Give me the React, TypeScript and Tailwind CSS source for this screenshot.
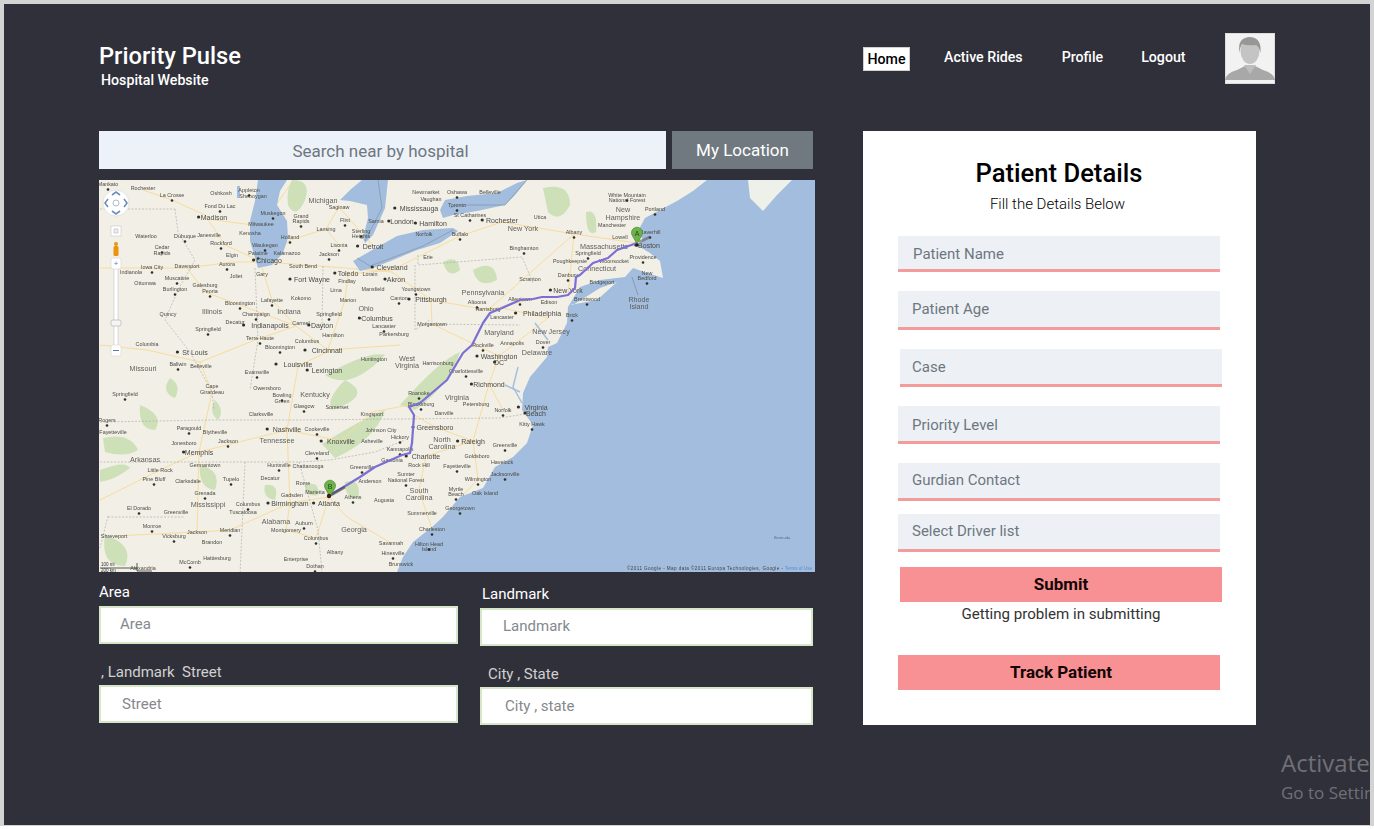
// App.tsx
import React from "react";

type Label = [string, number, number];

const cities: Label[] = [
  ["Mankato", 108, 184], ["Rochester", 143, 188], ["La Crosse", 172, 195], ["Oshkosh", 221, 193], ["Appleton", 249, 190],
  ["Sheboygan", 253, 196], ["Fond Du Lac", 220, 206], ["Milwaukee", 261, 224], ["Muskegon", 273, 213], ["Grand", 301, 216],
  ["Rapids", 301, 221], ["Saginaw", 339, 207], ["Flint", 345, 220], ["Lansing", 326, 229], ["Holland", 290, 237],
  ["Waterloo", 146, 236], ["Cedar", 162, 247], ["Rapids", 162, 253], ["Dubuque", 185, 236], ["Janesville", 209, 235],
  ["Rockford", 221, 243], ["Kenosha", 250, 233], ["Waukegan", 265, 245], ["Elgin", 232, 255], ["Palatine", 258, 253],
  ["Kalamazoo", 287, 253], ["Jackson", 329, 254], ["South Bend", 303, 266], ["Aurora", 227, 264], ["Davenport", 187, 266],
  ["Iowa City", 152, 267], ["Indianola", 131, 272], ["Muscatine", 177, 278], ["Joliet", 236, 276], ["Gary", 262, 274],
  ["Findlay", 347, 281], ["Burlington", 175, 289], ["Galesburg", 205, 285], ["Peoria", 210, 291], ["Ottumwa", 145, 283],
  ["Lima", 336, 290], ["Marion", 348, 300], ["Lafayette", 272, 300], ["Kokomo", 301, 298], ["Bloomington", 240, 303],
  ["Quincy", 168, 314], ["Champaign", 256, 314], ["Decatur", 235, 322], ["Springfield", 208, 329], ["Carmel", 301, 323],
  ["Springfield", 329, 314], ["Hamilton", 333, 335], ["Terre Haute", 260, 338], ["Columbus", 307, 341], ["Bloomington", 280, 347],
  ["Columbia", 147, 344], ["Ballwin", 178, 364], ["Belleville", 201, 366], ["Evansville", 257, 372], ["Owensboro", 267, 388],
  ["Cape", 212, 386], ["Girardeau", 212, 392], ["Bowling", 282, 395], ["Green", 282, 401], ["Springfield", 125, 394],
  ["Clarksville", 261, 414], ["Glasgow", 304, 406], ["Somerset", 337, 407], ["Rogers", 107, 420], ["Fayetteville", 113, 432],
  ["Paragould", 189, 428], ["Blytheville", 215, 432], ["Cookeville", 317, 429], ["Jonesboro", 184, 443], ["Jackson", 228, 441],
  ["Germantown", 205, 465], ["Cleveland", 317, 453], ["Chattanooga", 308, 466], ["Huntsville", 279, 465], ["Little Rock", 160, 470],
  ["Pine Bluff", 154, 479], ["Decatur", 270, 478], ["Tupelo", 231, 479], ["Clarksdale", 188, 481], ["Rome", 303, 483],
  ["Gadsden", 292, 495], ["Grenada", 205, 493], ["Marietta", 315, 492], ["Columbus", 248, 504], ["Tuscaloosa", 243, 512],
  ["El Dorado", 139, 508], ["Greenville", 176, 512], ["Auburn", 304, 523], ["Montgomery", 286, 530], ["Monroe", 152, 526],
  ["Jackson", 197, 532], ["Meridian", 230, 530], ["Shreveport", 114, 536], ["Vicksburg", 174, 536], ["Brandon", 212, 542],
  ["Columbus", 316, 538], ["Hattiesburg", 217, 558], ["McComb", 190, 562], ["Enterprise", 296, 559], ["Dothan", 315, 566],
  ["Albany", 335, 552], ["Alexandria", 143, 568], ["Newmarket", 426, 192], ["Oshawa", 457, 192], ["Vaughan", 431, 199],
  ["Toronto", 457, 205], ["Belleville", 490, 192], ["St Catharines", 470, 215], ["Utica", 540, 217], ["Albany", 574, 232],
  ["Sarnia", 376, 221], ["Buffalo", 460, 234], ["Norfolk", 424, 234], ["Sterling", 361, 231], ["Heights", 361, 236],
  ["Livonia", 339, 245], ["Erie", 428, 257], ["Binghamton", 524, 248], ["Lorain", 370, 274], ["Youngstown", 416, 289],
  ["Mansfield", 373, 289], ["Canton", 399, 298], ["Scranton", 530, 279], ["Altoona", 477, 302], ["Harrisburg", 488, 309],
  ["Allentown", 520, 299], ["Edison", 549, 302], ["Danbury", 568, 275], ["Bridgeport", 602, 282], ["Brentwood", 587, 299],
  ["Poughkeepsie", 570, 261], ["Springfield", 588, 253], ["Woonsocket", 614, 261], ["Providence", 643, 257], ["Lowell", 620, 237],
  ["Haverhill", 650, 232], ["Manchester", 612, 225], ["White Mountain", 627, 195], ["National Forest", 627, 200], ["Portland", 655, 209],
  ["New", 647, 273], ["Bedford", 647, 278], ["Lancaster", 502, 317], ["Brick", 572, 315], ["Morgantown", 432, 324],
  ["Lancaster", 384, 326], ["Parkersburg", 394, 334], ["Dover", 543, 342], ["Annapolis", 512, 343], ["Rockville", 483, 345],
  ["Harrisonburg", 438, 363], ["Charlottesville", 466, 371], ["Huntington", 374, 359], ["Roanoke", 419, 393], ["Petersburg", 476, 404],
  ["Blacksburg", 421, 404], ["Danville", 444, 413], ["Norfolk", 503, 410], ["Kingsport", 372, 414], ["Kitty Hawk", 532, 424],
  ["Johnson City", 381, 430], ["Hickory", 400, 437], ["Asheville", 372, 441], ["Greenville", 505, 445], ["Goldsboro", 477, 456],
  ["Kannapolis", 400, 449], ["Rock Hill", 419, 465], ["Fayetteville", 457, 466], ["Havelock", 502, 462], ["Jacksonville", 505, 474],
  ["Gastonia", 392, 460], ["Greenville", 362, 467], ["Sumter", 406, 474], ["National Forest", 406, 480], ["Anderson", 370, 481],
  ["Wilmington", 478, 479], ["Myrtle", 456, 489], ["Beach", 456, 494], ["Oak Island", 485, 493], ["Athens", 353, 497],
  ["Augusta", 384, 500], ["Georgetown", 460, 508], ["Summerville", 422, 513], ["Charleston", 432, 529], ["Savannah", 391, 543],
  ["Hilton Head", 429, 544], ["Island", 429, 549], ["Hinesville", 393, 553], ["Brunswick", 401, 564],
];

const bigCities: Label[] = [
  ["Madison", 214, 217], ["Chicago", 269, 260], ["Fort Wayne", 312, 279], ["Indianapolis", 270, 325], ["Dayton", 322, 325],
  ["Cincinnati", 327, 350], ["St Louis", 195, 352], ["Louisville", 298, 364], ["Lexington", 327, 370], ["Nashville", 287, 429],
  ["Knoxville", 341, 441], ["Memphis", 199, 452], ["Birmingham", 290, 503], ["Atlanta", 329, 503], ["Mississauga", 419, 208],
  ["Hamilton", 433, 223], ["Rochester", 502, 220], ["London", 402, 221], ["Detroit", 373, 246], ["Toledo", 348, 273],
  ["Cleveland", 392, 267], ["Akron", 396, 279], ["Pittsburgh", 431, 299], ["New York", 568, 290], ["Boston", 649, 245],
  ["Philadelphia", 542, 313], ["Columbus", 377, 318], ["Washington", 499, 356], ["DC", 499, 362], ["Richmond", 489, 384],
  ["Virginia", 536, 407], ["Beach", 536, 413], ["Greensboro", 435, 427], ["Raleigh", 473, 441], ["Charlotte", 426, 456],
];

const regions: Label[] = [
  ["Michigan", 323, 200], ["Illinois", 212, 311], ["Indiana", 289, 311], ["Missouri", 143, 368], ["Kentucky", 315, 394],
  ["Tennessee", 277, 440], ["Arkansas", 145, 459], ["Mississippi", 208, 504], ["Alabama", 276, 521], ["Georgia", 354, 529],
  ["New York", 523, 228], ["Pennsylvania", 483, 292], ["Ohio", 366, 308], ["Maryland", 499, 332], ["New Jersey", 551, 331],
  ["Delaware", 537, 352], ["West", 407, 358], ["Virginia", 407, 365], ["Virginia", 457, 397], ["North", 442, 439],
  ["Carolina", 442, 446], ["South", 419, 490], ["Carolina", 419, 497], ["Massachusetts", 604, 246], ["Connecticut", 597, 268],
  ["New", 623, 209], ["Hampshire", 623, 217], ["Rhode", 639, 299], ["Island", 639, 306],
];

const roads = [
  "M143 190 L172 200 L205 215 L225 245 L262 262",
  "M100 268 L187 268 L232 262 L266 262 L345 268 L392 272 L431 300",
  "M262 268 L272 300 L296 326 L328 350 L400 345",
  "M296 326 L240 305 L205 292 L187 268",
  "M296 326 L255 340 L200 362 L147 350 L100 345",
  "M200 362 L212 392 L199 452 L160 470 L100 500",
  "M199 452 L287 430 L341 441 L372 412 L420 403",
  "M287 430 L298 366 L327 352 L345 300 L348 274",
  "M287 430 L290 503 L329 497",
  "M290 503 L230 530 L197 532 L114 536",
  "M329 497 L316 538 L286 530 L290 503",
  "M329 497 L347 517 L391 543",
  "M426 456 L473 441 L435 427 L414 415",
  "M473 441 L478 479 L432 529",
  "M426 456 L419 490 L432 529",
  "M348 274 L392 270 L460 236 L502 222 L574 234 L637 243",
  "M574 234 L568 295",
  "M431 300 L488 310 L533 299",
  "M488 310 L574 234",
  "M502 308 L548 318 L499 356 L489 384 L503 410",
  "M489 384 L473 441",
  "M339 245 L326 229 L339 207 L373 246",
  "M326 229 L290 240 L268 262",
  "M214 220 L261 226 L290 185",
  "M199 452 L197 532",
  "M431 300 L432 324 L499 356",
];

const borders = [
  "M100 209 L175 209",
  "M255 268 L258 340 L250 390",
  "M323 266 L322 330",
  "M175 209 L178 232 L195 260 L178 290 L165 320 L190 352 L212 392 L214 410",
  "M100 422 L215 420 L300 420 L500 418 L525 414",
  "M100 462 L300 462 L330 460 L375 452 L405 440",
  "M108 516 L100 548",
  "M108 517 L185 517",
  "M245 462 L240 575",
  "M299 462 L318 530 L322 572",
  "M415 265 L415 330 L430 320",
  "M418 255 L418 265 L522 257 L533 283",
  "M425 324 L520 325",
];

const greens = [
  "M292 180 Q312 180 305 200 Q296 220 288 205 Q286 190 292 180Z",
  "M543 188 Q570 182 570 205 Q560 224 548 212Z",
  "M586 212 Q598 208 596 232 Q586 238 586 212Z",
  "M443 262 Q458 254 460 270 Q448 280 443 262Z",
  "M473 270 Q495 258 497 280 Q478 290 473 270Z",
  "M140 405 Q165 415 155 430 Q138 430 140 405Z",
  "M103 438 Q130 432 138 450 Q125 458 105 452Z",
  "M100 470 Q125 460 130 468 Q115 480 100 482Z",
  "M170 378 Q182 385 175 398 Q160 392 170 378Z",
  "M215 400 Q225 410 218 420 Q208 412 215 400Z",
  "M332 410 Q375 395 345 380 Q325 400 332 410Z",
  "M325 375 Q370 350 385 355 Q350 392 325 375Z",
  "M400 405 Q440 360 460 352 Q450 385 415 410Z",
  "M322 444 Q360 420 385 410 Q375 440 335 458Z",
  "M200 465 Q222 470 215 490 Q198 488 200 465Z",
  "M345 482 Q362 478 358 498 Q345 500 345 482Z",
  "M105 535 Q135 545 125 566 Q100 566 105 535Z",
  "M305 485 Q320 480 318 495 Q305 498 305 485Z",
  "M265 485 Q280 483 275 500 Q262 498 265 485Z",
];

const route =
  "M637 243 L617 250 L608 258 L593 263 L580 275 L576 277 L575 288 L568 295 L557 297 L542 297 L533 299 L520 300 L502 308 L490 313 L483 323 L478 333 L472 345 L463 353 L457 363 L447 380 L433 392 L420 403 L409 407 L414 415 L412 443 L410 453 L402 455 L375 467 L360 477 L347 485 L330 495";

const MapView = () => (
  <svg viewBox="99 180 716 392" className="block w-[716px] h-[392px] mt-[11px] blur-[0.4px]" fontFamily="Liberation Sans, sans-serif">
    <rect x="99" y="180" width="716" height="392" fill="#f2efe6" />
    {greens.map((d, i) => (
      <path key={i} d={d} fill="#cde0b8" />
    ))}
    <g fill="none" stroke="#f8dc9c" strokeWidth="1">
      {roads.map((d, i) => (
        <path key={i} d={d} />
      ))}
    </g>
    <g fill="none" stroke="#a5a5a5" strokeWidth="0.6" strokeDasharray="2 1.5">
      {borders.map((d, i) => (
        <path key={i} d={d} />
      ))}
    </g>
    {/* ocean and lakes */}
    <g fill="#a2bddd">
      <path d="M815 180 L707 180 L693 191 L677 201 L660 210 L645 218 L638 231 L643 240 L638 246 L650 253 L660 261 L663 278 L647 273 L633 268 L625 277 L600 280 L580 287 L568 307 L567 323 L557 343 L548 347 L547 357 L530 377 L523 393 L522 410 L533 425 L527 443 L513 457 L495 467 L483 488 L460 497 L443 517 L432 527 L413 542 L403 557 L397 572 L815 572Z" />
      <path d="M258 180 L287 180 L280 191 L277 205 L287 221 L288 238 L283 253 L272 265 L258 268 L255 258 L250 241 L250 221 L255 201Z" />
      <path d="M340 200 L350 190 L362 180 L388 180 L385 208 L373 235 L365 243 L363 238 L368 218 L367 205 L350 201Z" />
      <path d="M353 261 L367 253 L397 236 L423 230 L453 228 L458 231 L440 243 L417 250 L393 260 L373 268 L360 271Z" />
      <path d="M440 210 L445 200 L467 196 L497 193 L517 183 L527 180 L515 195 L505 205 L477 211 L453 215 L443 218Z" />
      <path d="M237 186 L240 186 L240 198 L237 198Z" />
    </g>
    <path d="M573 305 L600 288 L617 282 L597 300 L570 305Z" fill="#f2efe6" />
    <path d="M748 180 L792 180 L777 195 L763 211 L750 198Z" fill="#eef0ea" />
    <g fill="none" stroke="#a2bddd" strokeWidth="1.4">
      <path d="M518 367 L513 387 L522 403" />
      <path d="M535 323 L548 340" />
      <path d="M505 385 L520 392" />
    </g>
    <path d="M378 180 L382 208 L365 241 M357 258 L370 266 L397 256 L423 246 L453 230 M450 208 L457 205 L505 205 L527 180" fill="none" stroke="#7f8c9b" strokeWidth="0.6" />
    <path d="M632 277 L638 295" stroke="#777" strokeWidth="0.5" />
    {/* city labels */}
    <g fill="#4b4b45" fontSize="5.4" textAnchor="middle">
      {cities.map(([t, x, y], i) => (
        <text key={i} x={x} y={y + 2}>
          {t}
        </text>
      ))}
    </g>
    <g fill="#2f2f2a">
      {cities.map(([t, x, y], i) =>
        i % 2 === 0 && t.length > 4 ? <circle key={i} cx={x} cy={y + 5.5} r="1.3" /> : null
      )}
      {bigCities.map(([t, x, y], i) => (
        <circle key={i} cx={x - t.length * 2.2} cy={y} r="1.6" />
      ))}
    </g>
    <g fill="#4a4a44" fontSize="7" textAnchor="middle">
      {bigCities.map(([t, x, y], i) => (
        <text key={i} x={x} y={y + 2.5}>
          {t}
        </text>
      ))}
    </g>
    <g fill="#5f5f5a" fontSize="7.2" textAnchor="middle">
      {regions.map(([t, x, y], i) => (
        <text key={i} x={x} y={y + 2.5}>
          {t}
        </text>
      ))}
    </g>
    <text x="782" y="539" fontSize="4" fill="#5f6f85" textAnchor="middle">
      Bermuda
    </text>
    {/* route */}
    <path d={route} fill="none" stroke="#7b6fd4" strokeWidth="2.2" strokeLinejoin="round" />
    <path d="M639 242 L650 237" stroke="#555" strokeWidth="3" opacity="0.55" />
    <path d="M331 495 L345 487" stroke="#444" strokeWidth="3" opacity="0.6" />
    <path d="M637 244 L632 235 A5.5 5.5 0 1 1 642 235Z" fill="#6eb24b" stroke="#3c7a26" strokeWidth="0.6" />
    <text x="637" y="236" fontSize="7" textAnchor="middle" fill="#1f4d12">A</text>
    <circle cx="637" cy="245" r="1.8" fill="#222" />
    <path d="M330 497 L325 488 A5.5 5.5 0 1 1 335 488Z" fill="#6eb24b" stroke="#3c7a26" strokeWidth="0.6" />
    <text x="330" y="489" fontSize="7" textAnchor="middle" fill="#1f4d12">B</text>
    <circle cx="329" cy="496" r="2.2" fill="#3a1a1a" />
    {/* map controls */}
    <circle cx="116" cy="203" r="13" fill="#fff" stroke="#d5d5d5" strokeWidth="0.6" />
    <g fill="none" stroke="#6f8fbb" strokeWidth="1.6">
      <path d="M112 195 L116 192 L120 195" />
      <path d="M112 211 L116 214 L120 211" />
      <path d="M108 199 L105 203 L108 207" />
      <path d="M124 199 L127 203 L124 207" />
    </g>
    <circle cx="116" cy="203" r="3" fill="none" stroke="#aeb9c8" strokeWidth="1" />
    <rect x="111" y="226" width="10" height="10" fill="#fff" stroke="#c8c8c8" strokeWidth="0.6" />
    <rect x="114" y="229" width="4" height="4" fill="#eee" stroke="#aaa" strokeWidth="0.5" />
    <rect x="111" y="241" width="10" height="17" rx="2" fill="#f2efe6" />
    <circle cx="116" cy="244" r="2" fill="#e8940f" />
    <rect x="113.5" y="246" width="5" height="10" rx="1.5" fill="#e8940f" />
    <rect x="114" y="268" width="4" height="80" fill="#fff" stroke="#bbb" strokeWidth="0.5" />
    <rect x="111" y="258" width="10" height="11" rx="2" fill="#fff" stroke="#ccc" strokeWidth="0.5" />
    <text x="116" y="266" fontSize="8" textAnchor="middle" fill="#5a7db0">+</text>
    <rect x="111" y="320" width="10" height="6" rx="2" fill="#f5f5f5" stroke="#aaa" strokeWidth="0.6" />
    <rect x="111" y="345" width="10" height="11" rx="2" fill="#fff" stroke="#ccc" strokeWidth="0.5" />
    <path d="M113 350.5 L119 350.5" stroke="#5a7db0" strokeWidth="1" />
    {/* scale and credits */}
    <path d="M100 568 L137 568 M137 563 L137 571 L152 571" fill="none" stroke="#333" strokeWidth="0.8" />
    <text x="101" y="566" fontSize="4.5" fill="#333">100 mi</text>
    <text x="101" y="571.5" fontSize="4.5" fill="#333">200 km</text>
    <text x="627" y="570" fontSize="4.6" fill="#444" textLength="156">
      ©2011 Google - Map data ©2011 Europa Technologies, Google -
    </text>
    <text x="785" y="570" fontSize="4.6" fill="#5c8ed6">Terms of Use</text>
  </svg>
);

const Avatar = () => (
  <svg viewBox="0 0 50 51" className="block w-[50px] h-[51px] ml-[39px] mt-[29px]">
    <rect width="50" height="51" fill="#f2f2f2" />
    <rect x="0.5" y="0.5" width="49" height="50" fill="none" stroke="#dcdcdc" />
    <path d="M0 47 Q1 40 12 37 L20 33 L30 33 L38 37 Q49 40 50 47Z" fill="#a8a8a8" />
    <path d="M19 32 L25 41 L31 32Z" fill="#bdbdbd" />
    <ellipse cx="25" cy="18" rx="9.5" ry="13" fill="#c4c4c4" />
    <path d="M14.5 20 Q12 5 24 4 Q37 4 35.5 20 Q34 13 31 12 Q22 13 17 11 Q15 14 14.5 20Z" fill="#979797" />
  </svg>
);

const Field = ({ label, className }: { label: string; className: string }) => (
  <div className={`flex items-center bg-[#edf1f5] border-b-[3px] border-[#f29c9c] text-[15px] text-[#6e7780] ${className}`}>
    {label}
  </div>
);

const AddressField = ({ label, hint, labelClass, boxClass }: { label: string; hint: string; labelClass: string; boxClass: string }) => (
  <div>
    <div className={`text-[15px] leading-[18px] whitespace-pre ${labelClass}`}>{label}</div>
    <div className={`flex items-center h-[38px] bg-white border-2 border-[#d6e6c9] text-[15px] text-[#85898d] ${boxClass}`}>{hint}</div>
  </div>
);

export default function App() {
  return (
    <div className="w-[1374px] h-[829px] overflow-hidden bg-white font-['Roboto',sans-serif]">
      <div className="relative h-[826px] bg-[#d2d3d2] pt-1 px-1">
        <div className="relative h-[821px] overflow-hidden bg-[#30303a] pl-[95px]">
          {/* header */}
          <div className="flex h-[127px]">
            <div className="w-[764px] pt-[37px] text-white">
              <div className="text-[23.7px] leading-[30px] font-medium">Priority Pulse</div>
              <div className="ml-[2px] text-[14.2px] leading-[18px] font-medium">Hospital Website</div>
            </div>
            <div className="flex items-start text-[14.2px] font-medium text-white">
              <div className="mt-[43px] pt-[2px] w-[47px] h-[24px] bg-white text-black flex items-center justify-center border border-[#d0d0d0]">Home</div>
              <div className="mt-[44px] ml-[34px] leading-[18px]">Active Rides</div>
              <div className="mt-[44px] ml-[39px] leading-[18px]">Profile</div>
              <div className="mt-[44px] ml-[38px] leading-[18px]">Logout</div>
              <Avatar />
            </div>
          </div>

          {/* main */}
          <div className="flex">
            <div className="w-[764px]">
              <div className="flex w-[714px] h-[38px] gap-[6px]">
                <div className="w-[567px] flex items-center justify-center pt-[3px] pr-[4px] bg-[#edf2f8] text-[17px] text-[#6e7680]">Search near by hospital</div>
                <div className="w-[141px] flex items-center justify-center pt-[1px] bg-[#707980] text-[17px] text-white">My Location</div>
              </div>
              <MapView />
              <div className="flex gap-[22px] w-[714px]">
                <div className="w-[359px] mt-[11px]">
                  <AddressField label="Area" hint="Area" labelClass="mb-[5px] text-white" boxClass="pl-[19px] pb-[1px]" />
                  <div className="mt-[19px]">
                    <AddressField label=", Landmark  Street" hint="Street" labelClass="mb-[4px] ml-[2px] text-[#d0d0d0]" boxClass="pl-[21px] pt-[1px]" />
                  </div>
                </div>
                <div className="w-[333px] mt-[13px]">
                  <AddressField label="Landmark" hint="Landmark" labelClass="mb-[5px] ml-[2px] text-white" boxClass="pl-[21px] pb-[1px]" />
                  <div className="mt-[19px]">
                    <AddressField label="City , State" hint="City , state" labelClass="mb-[4px] ml-[8px] text-[#d0d0d0]" boxClass="pl-[23px]" />
                  </div>
                </div>
              </div>
            </div>

            {/* patient card */}
            <div className="w-[393px] h-[594px] bg-white pl-[35px] pt-[25px]">
              <div className="w-[322px] text-center">
                <div className="text-[25.6px] leading-[34px] font-medium text-black">Patient Details</div>
                <div className="mt-[5px] pr-[3px] text-[15px] leading-[18px] font-light text-black">Fill the Details Below</div>
              </div>
              <Field label="Patient Name" className="mt-[23px] pl-[15px] pt-[4px] w-[322px] h-[36px]" />
              <Field label="Patient Age" className="mt-[19px] pl-[14px] w-[322px] h-[39px]" />
              <Field label="Case" className="mt-[19px] ml-[2px] pl-[12px] pt-[2px] w-[322px] h-[38px]" />
              <Field label="Priority Level" className="mt-[19px] pl-[14px] pt-[3px] w-[322px] h-[38px]" />
              <Field label="Gurdian Contact" className="mt-[19px] pl-[14px] w-[322px] h-[38px]" />
              <Field label="Select Driver list" className="mt-[13px] pl-[14px] w-[322px] h-[38px]" />
              <div className="mt-[15px] ml-[2px] w-[322px] h-[35px] flex items-center justify-center bg-[#f89193] text-[17px] font-bold text-[#140606]">Submit</div>
              <div className="mt-[2px] ml-[2px] w-[322px] text-center text-[15.1px] leading-[20px] text-[#333]">Getting problem in submitting</div>
              <div className="mt-[31px] pl-[4px] w-[322px] h-[35px] flex items-center justify-center bg-[#f89193] text-[17px] font-bold text-[#140606]">Track Patient</div>
            </div>
          </div>

          {/* windows watermark */}
          <div className="absolute left-[1277px] top-[743px] whitespace-nowrap font-['Open_Sans',sans-serif] text-[#6f7076]">
            <div className="text-[24px] leading-[32px]">Activate Windows</div>
            <div className="mt-[2px] text-[17px] leading-[24px]">Go to Settings to activate Windows.</div>
          </div>
        </div>
      </div>
    </div>
  );
}
